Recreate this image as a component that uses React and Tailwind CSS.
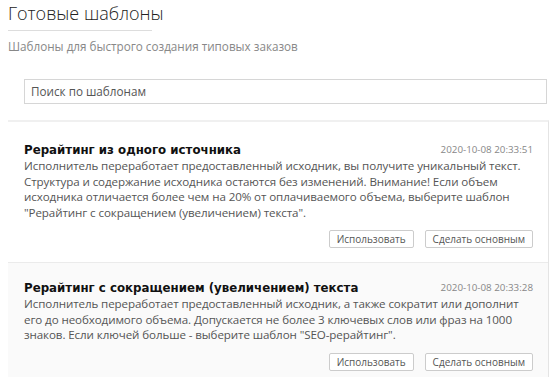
import React from "react";

const templates = [
  {
    title: "Рерайтинг из одного источника",
    date: "2020-10-08 20:33:51",
    text:
      'Исполнитель переработает предоставленный исходник, вы получите уникальный текст. Структура и содержание исходника остаются без изменений. Внимание! Если объем исходника отличается более чем на 20% от оплачиваемого объема, выберите шаблон "Рерайтинг с сокращением (увеличением) текста".',
    bg: "bg-white",
    pad: "pt-[20px] pb-[14px]",
  },
  {
    title: "Рерайтинг с сокращением (увеличением) текста",
    date: "2020-10-08 20:33:28",
    text:
      'Исполнитель переработает предоставленный исходник, а также сократит или дополнит его до необходимого объема. Допускается не более 3 ключевых слов или фраз на 1000 знаков. Если ключей больше - выберите шаблон "SEO-рерайтинг".',
    bg: "bg-[#fafafa] border-t border-[#ebebeb]",
    pad: "pt-[17px] pb-[8px]",
  },
];

const App = () => {
  return (
    <div className="w-[549px] h-[377px] overflow-hidden bg-white flex flex-col font-['Open_Sans',sans-serif]">
      <div className="pl-2 pt-px">
        <h1 className="text-[18px] leading-[24px] text-[#222] font-light">Готовые шаблоны</h1>
        <div className="w-[144px] h-px bg-[#ddd] mt-[5px]"></div>
        <p className="mt-[7px] text-[11.7px] leading-[16px] text-[#888]">
          Шаблоны для быстрого создания типовых заказов
        </p>
      </div>

      <div className="pl-6 pr-[2px] mt-[25px]">
        <div className="h-[25px] border border-[#d6d6d6] flex items-center px-[6px] text-[11.7px] text-[#555]">
          Поиск по шаблонам
        </div>
      </div>

      <div className="ml-2 mt-[16px] border-t-2 border-[#f0f0f0] flex flex-col flex-1 border-r border-r-[#e4e4e4]">
        {templates.map((t, i) => (
          <div key={i} className={`${t.bg} ${t.pad} pl-4 pr-[15px]`}>
            <div className="flex items-center justify-between">
              <h2 className="font-['DejaVu_Sans',sans-serif] font-bold text-[11.8px] leading-[16px] text-[#111]">
                {t.title}
              </h2>
              <span className="text-[9.8px] text-[#888]">{t.date}</span>
            </div>
            <p className="text-[11.6px] leading-[15.5px] text-[#555] tracking-[-0.1px]">{t.text}</p>
            <div className="flex justify-end gap-[11px] mt-[10px]">
              <button className="h-[18px] px-[7px] border border-[#ccc] rounded-[2px] bg-white text-[10px] text-[#555] leading-none">
                Использовать
              </button>
              <button className="h-[18px] px-[7px] border border-[#ccc] rounded-[2px] bg-white text-[10px] text-[#555] leading-none">
                Сделать основным
              </button>
            </div>
          </div>
        ))}
      </div>
      <div className="h-[4px] bg-[#e39021] shrink-0"></div>
    </div>
  );
};

export default App;
